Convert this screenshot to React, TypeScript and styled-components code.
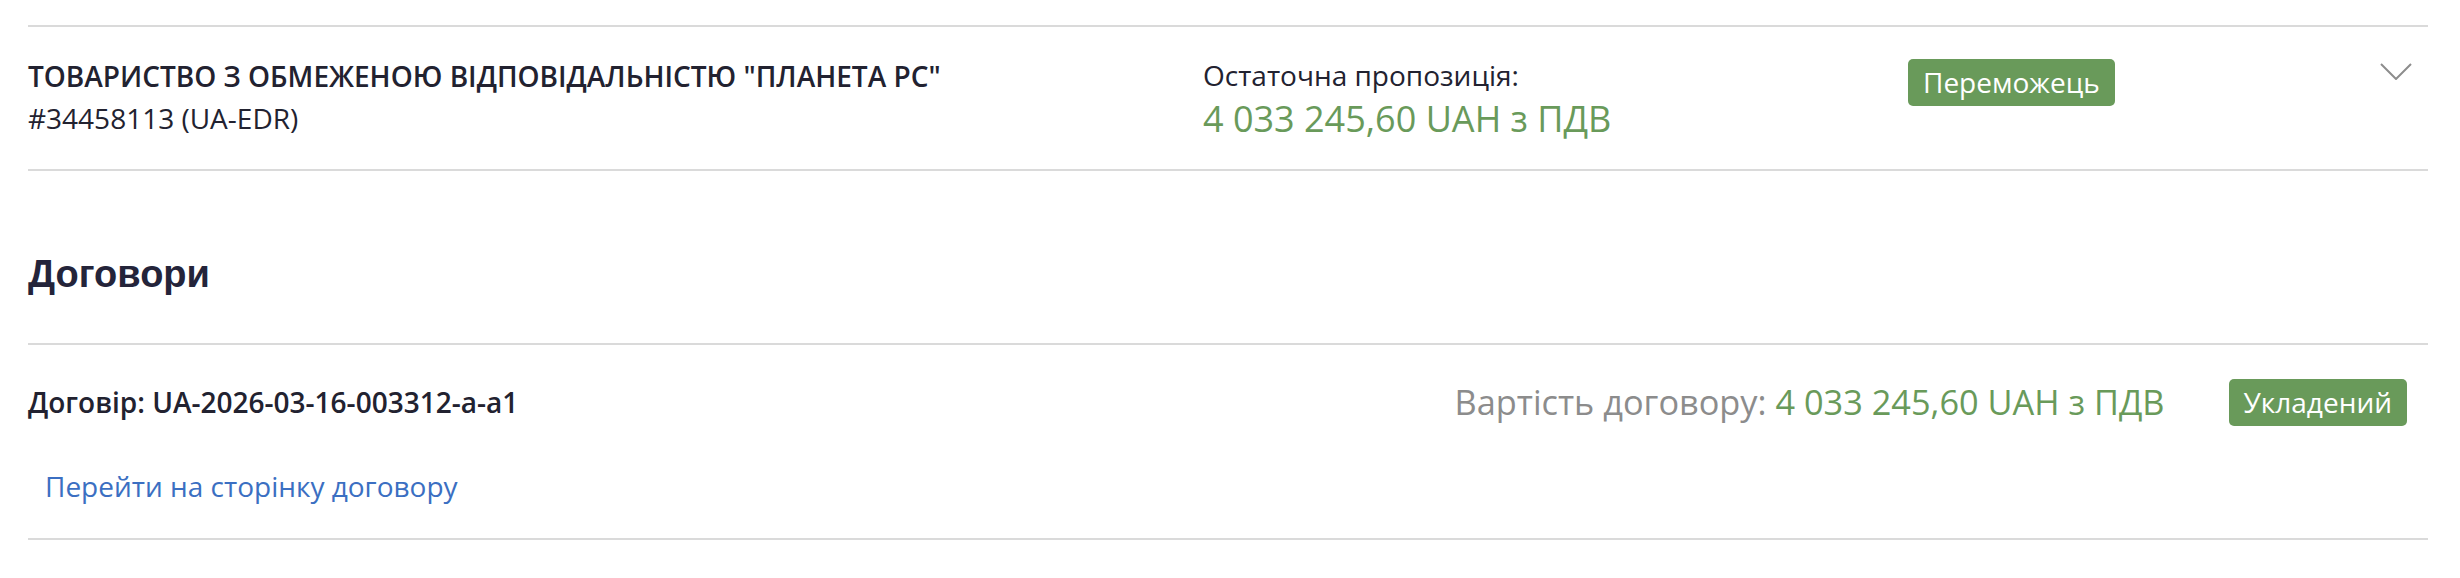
import styled, { createGlobalStyle } from "styled-components";

const GlobalStyle = createGlobalStyle`
  body {
    margin: 0;
    background: #ffffff;
    font-family: "Open Sans", "Noto Sans", sans-serif;
    color: #222230;
  }
`;

const green = "#699a5a";
const line = "#dadada";

function App() {
  return (
    <Page>
      <GlobalStyle />
      <BidRow>
        <div>
          <Name>ТОВАРИСТВО З ОБМЕЖЕНОЮ ВІДПОВІДАЛЬНІСТЮ "ПЛАНЕТА PC"</Name>
          <Text>#34458113 (UA-EDR)</Text>
        </div>
        <div>
          <Label>Остаточна пропозиція:</Label>
          <Amount>4 033 245,60 UAH з ПДВ</Amount>
        </div>
        <div>
          <Badge top={4}>Переможець</Badge>
        </div>
        <Chevron width="32" height="17" viewBox="0 0 32 17">
          <polyline points="1,1 16,16 31,1" fill="none" stroke="#8d8d8d" strokeWidth="2" />
        </Chevron>
      </BidRow>

      <SectionTitle>Договори</SectionTitle>

      <Contract>
        <ContractRow>
          <Name>Договір: UA-2026-03-16-003312-a-a1</Name>
          <ValueGroup>
            <Value>
              <Muted>Вартість договору:</Muted> <Price>4 033 245,60 UAH з ПДВ</Price>
            </Value>
            <Badge>Укладений</Badge>
          </ValueGroup>
        </ContractRow>
        <Link href="#">Перейти на сторінку договору</Link>
      </Contract>
    </Page>
  );
}

export default App;

const Page = styled.div`
  padding: 25px 32px 0 28px;
`;

const BidRow = styled.div`
  display: grid;
  grid-template-columns: 1175px 705px 1fr auto;
  align-items: start;
  border-top: 2px solid ${line};
  border-bottom: 2px solid ${line};
  padding: 28px 16px 26px 0;
`;

const Name = styled.div`
  font-size: 28px;
  line-height: 42px;
  font-weight: 600;
  color: #222230;
`;

const Text = styled.div`
  font-size: 28px;
  line-height: 42px;
  color: #222230;
`;

const Label = styled.div`
  margin-top: 1px;
  font-size: 28px;
  line-height: 38px;
  color: #222230;
`;

const Amount = styled.div`
  font-size: 36px;
  line-height: 49px;
  color: ${green};
`;

const Badge = styled.span<{ top?: number }>`
  display: inline-block;
  margin-top: ${(p) => p.top || 0}px;
  height: 47px;
  line-height: 47px;
  padding: 0 15px;
  border-radius: 5px;
  background: ${green};
  color: #ffffff;
  font-size: 28px;
`;

const Chevron = styled.svg`
  margin-top: 8px;
  display: block;
`;

const SectionTitle = styled.h2`
  margin: 81px 0 47px;
  font-family: "Liberation Sans", Arial, sans-serif;
  font-size: 38px;
  line-height: 44px;
  font-weight: 700;
  color: #24243a;
`;

const Contract = styled.div`
  border-top: 2px solid ${line};
  border-bottom: 2px solid ${line};
  padding: 31px 21px 31px 0;
`;

const ContractRow = styled.div`
  display: flex;
  align-items: center;
  justify-content: space-between;
  height: 52px;
`;

const ValueGroup = styled.div`
  display: flex;
  align-items: center;
  gap: 64px;
`;

const Value = styled.div`
  font-size: 34.3px;
  line-height: 52px;
`;

const Muted = styled.span`
  color: #8c8c8c;
`;

const Price = styled.span`
  color: ${green};
`;

const Link = styled.a`
  display: block;
  margin-top: 37px;
  padding-left: 17px;
  font-size: 28px;
  line-height: 42px;
  color: #3b6fc2;
  text-decoration: none;
`;
